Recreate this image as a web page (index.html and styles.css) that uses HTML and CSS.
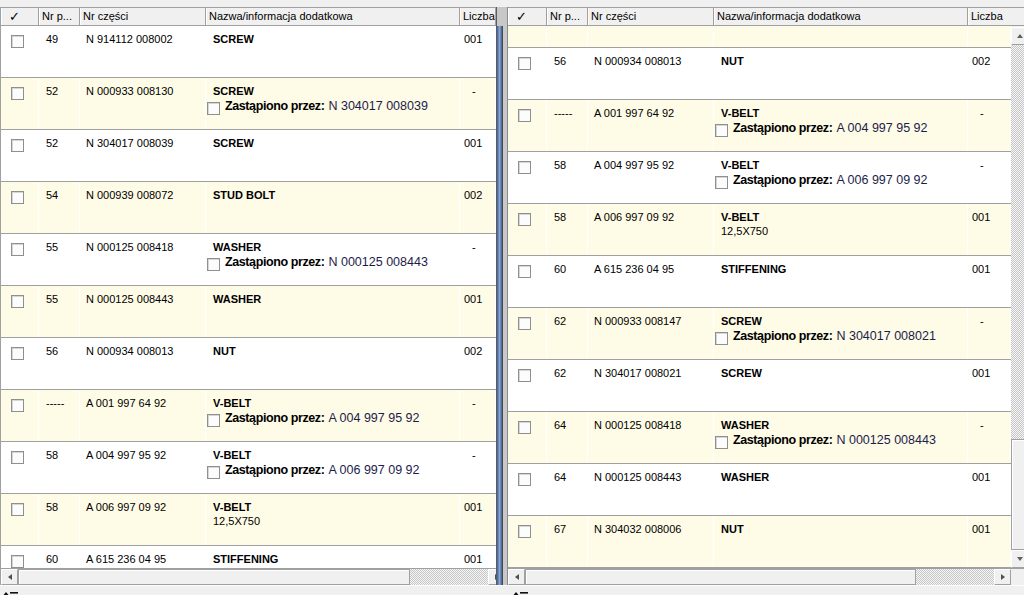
FILE: index.html
```html
<!DOCTYPE html>
<html lang="pl">
<head>
    <meta charset="UTF-8">
    <title>Lista części</title>
    <link rel="stylesheet" href="styles.css">
</head>
<body>
    <div class="topbar"></div>

    <div class="main">
        <!-- Left list -->
        <div class="pane pane-left">
            <div class="head">
                <div class="hc hc-check">✓</div>
                <div class="hc">Nr p...</div>
                <div class="hc">Nr części</div>
                <div class="hc">Nazwa/informacja dodatkowa</div>
                <div class="hc">Liczba</div>
            </div>
            <div class="body">
                <div class="rows">
                    <div class="row">
                        <div class="c c-check"><span class="cb"></span></div>
                        <div class="c c-pos">49</div>
                        <div class="c c-nr">N 914112 008002</div>
                        <div class="c c-name"><b>SCREW</b></div>
                        <div class="c c-qty">001</div>
                    </div>
                    <div class="row alt">
                        <div class="c c-check"><span class="cb"></span></div>
                        <div class="c c-pos">52</div>
                        <div class="c c-nr">N 000933 008130</div>
                        <div class="c c-name"><b>SCREW</b>
                            <div class="repl"><span class="cb"></span><b>Zastąpiono przez:</b> <span class="repl-nr">N 304017 008039</span></div>
                        </div>
                        <div class="c c-qty dash">-</div>
                    </div>
                    <div class="row">
                        <div class="c c-check"><span class="cb"></span></div>
                        <div class="c c-pos">52</div>
                        <div class="c c-nr">N 304017 008039</div>
                        <div class="c c-name"><b>SCREW</b></div>
                        <div class="c c-qty">001</div>
                    </div>
                    <div class="row alt">
                        <div class="c c-check"><span class="cb"></span></div>
                        <div class="c c-pos">54</div>
                        <div class="c c-nr">N 000939 008072</div>
                        <div class="c c-name"><b>STUD BOLT</b></div>
                        <div class="c c-qty">002</div>
                    </div>
                    <div class="row">
                        <div class="c c-check"><span class="cb"></span></div>
                        <div class="c c-pos">55</div>
                        <div class="c c-nr">N 000125 008418</div>
                        <div class="c c-name"><b>WASHER</b>
                            <div class="repl"><span class="cb"></span><b>Zastąpiono przez:</b> <span class="repl-nr">N 000125 008443</span></div>
                        </div>
                        <div class="c c-qty dash">-</div>
                    </div>
                    <div class="row alt">
                        <div class="c c-check"><span class="cb"></span></div>
                        <div class="c c-pos">55</div>
                        <div class="c c-nr">N 000125 008443</div>
                        <div class="c c-name"><b>WASHER</b></div>
                        <div class="c c-qty">001</div>
                    </div>
                    <div class="row">
                        <div class="c c-check"><span class="cb"></span></div>
                        <div class="c c-pos">56</div>
                        <div class="c c-nr">N 000934 008013</div>
                        <div class="c c-name"><b>NUT</b></div>
                        <div class="c c-qty">002</div>
                    </div>
                    <div class="row alt">
                        <div class="c c-check"><span class="cb"></span></div>
                        <div class="c c-pos">-----</div>
                        <div class="c c-nr">A 001 997 64 92</div>
                        <div class="c c-name"><b>V-BELT</b>
                            <div class="repl"><span class="cb"></span><b>Zastąpiono przez:</b> <span class="repl-nr">A 004 997 95 92</span></div>
                        </div>
                        <div class="c c-qty dash">-</div>
                    </div>
                    <div class="row">
                        <div class="c c-check"><span class="cb"></span></div>
                        <div class="c c-pos">58</div>
                        <div class="c c-nr">A 004 997 95 92</div>
                        <div class="c c-name"><b>V-BELT</b>
                            <div class="repl"><span class="cb"></span><b>Zastąpiono przez:</b> <span class="repl-nr">A 006 997 09 92</span></div>
                        </div>
                        <div class="c c-qty dash">-</div>
                    </div>
                    <div class="row alt">
                        <div class="c c-check"><span class="cb"></span></div>
                        <div class="c c-pos">58</div>
                        <div class="c c-nr">A 006 997 09 92</div>
                        <div class="c c-name"><b>V-BELT</b>
                            <div class="sub">12,5X750</div>
                        </div>
                        <div class="c c-qty">001</div>
                    </div>
                    <div class="row">
                        <div class="c c-check"><span class="cb"></span></div>
                        <div class="c c-pos">60</div>
                        <div class="c c-nr">A 615 236 04 95</div>
                        <div class="c c-name"><b>STIFFENING</b></div>
                        <div class="c c-qty">001</div>
                    </div>
                </div>
            </div>
            <div class="hscroll">
                <div class="sb-btn"><span class="arr arr-left"></span></div>
                <div class="sb-thumb"></div>
                <div class="sb-track"></div>
                <div class="sb-btn"><span class="arr arr-right"></span></div>
            </div>
        </div>

        <div class="splitter"><div class="splitter-bar"></div></div>

        <!-- Right list -->
        <div class="pane pane-right">
            <div class="head">
                <div class="hc hc-check">✓</div>
                <div class="hc">Nr p...</div>
                <div class="hc">Nr części</div>
                <div class="hc">Nazwa/informacja dodatkowa</div>
                <div class="hc">Liczba</div>
            </div>
            <div class="body">
                <div class="rows">
                    <div class="row alt partial">
                        <div class="c"></div>
                        <div class="c"></div>
                        <div class="c"></div>
                        <div class="c"></div>
                        <div class="c"></div>
                    </div>
                    <div class="row">
                        <div class="c c-check"><span class="cb"></span></div>
                        <div class="c c-pos">56</div>
                        <div class="c c-nr">N 000934 008013</div>
                        <div class="c c-name"><b>NUT</b></div>
                        <div class="c c-qty">002</div>
                    </div>
                    <div class="row alt">
                        <div class="c c-check"><span class="cb"></span></div>
                        <div class="c c-pos">-----</div>
                        <div class="c c-nr">A 001 997 64 92</div>
                        <div class="c c-name"><b>V-BELT</b>
                            <div class="repl"><span class="cb"></span><b>Zastąpiono przez:</b> <span class="repl-nr">A 004 997 95 92</span></div>
                        </div>
                        <div class="c c-qty dash">-</div>
                    </div>
                    <div class="row">
                        <div class="c c-check"><span class="cb"></span></div>
                        <div class="c c-pos">58</div>
                        <div class="c c-nr">A 004 997 95 92</div>
                        <div class="c c-name"><b>V-BELT</b>
                            <div class="repl"><span class="cb"></span><b>Zastąpiono przez:</b> <span class="repl-nr">A 006 997 09 92</span></div>
                        </div>
                        <div class="c c-qty dash">-</div>
                    </div>
                    <div class="row alt">
                        <div class="c c-check"><span class="cb"></span></div>
                        <div class="c c-pos">58</div>
                        <div class="c c-nr">A 006 997 09 92</div>
                        <div class="c c-name"><b>V-BELT</b>
                            <div class="sub">12,5X750</div>
                        </div>
                        <div class="c c-qty">001</div>
                    </div>
                    <div class="row">
                        <div class="c c-check"><span class="cb"></span></div>
                        <div class="c c-pos">60</div>
                        <div class="c c-nr">A 615 236 04 95</div>
                        <div class="c c-name"><b>STIFFENING</b></div>
                        <div class="c c-qty">001</div>
                    </div>
                    <div class="row alt">
                        <div class="c c-check"><span class="cb"></span></div>
                        <div class="c c-pos">62</div>
                        <div class="c c-nr">N 000933 008147</div>
                        <div class="c c-name"><b>SCREW</b>
                            <div class="repl"><span class="cb"></span><b>Zastąpiono przez:</b> <span class="repl-nr">N 304017 008021</span></div>
                        </div>
                        <div class="c c-qty dash">-</div>
                    </div>
                    <div class="row">
                        <div class="c c-check"><span class="cb"></span></div>
                        <div class="c c-pos">62</div>
                        <div class="c c-nr">N 304017 008021</div>
                        <div class="c c-name"><b>SCREW</b></div>
                        <div class="c c-qty">001</div>
                    </div>
                    <div class="row alt">
                        <div class="c c-check"><span class="cb"></span></div>
                        <div class="c c-pos">64</div>
                        <div class="c c-nr">N 000125 008418</div>
                        <div class="c c-name"><b>WASHER</b>
                            <div class="repl"><span class="cb"></span><b>Zastąpiono przez:</b> <span class="repl-nr">N 000125 008443</span></div>
                        </div>
                        <div class="c c-qty dash">-</div>
                    </div>
                    <div class="row">
                        <div class="c c-check"><span class="cb"></span></div>
                        <div class="c c-pos">64</div>
                        <div class="c c-nr">N 000125 008443</div>
                        <div class="c c-name"><b>WASHER</b></div>
                        <div class="c c-qty">001</div>
                    </div>
                    <div class="row alt">
                        <div class="c c-check"><span class="cb"></span></div>
                        <div class="c c-pos">67</div>
                        <div class="c c-nr">N 304032 008006</div>
                        <div class="c c-name"><b>NUT</b></div>
                        <div class="c c-qty">001</div>
                    </div>
                </div>
                <div class="vscroll">
                    <div class="sb-btn"><span class="arr arr-up"></span></div>
                    <div class="sb-track"></div>
                    <div class="sb-thumb"></div>
                    <div class="sb-btn"><span class="arr arr-down"></span></div>
                </div>
            </div>
            <div class="hscroll">
                <div class="sb-btn"><span class="arr arr-left"></span></div>
                <div class="sb-thumb"></div>
                <div class="sb-track"></div>
                <div class="sb-btn"><span class="arr arr-right"></span></div>
                <div class="sb-corner"></div>
            </div>
        </div>
    </div>

    <div class="statusbar">
        <div class="tool">
            <svg width="18" height="9" viewBox="0 0 18 9">
                <path d="M4 1 L1.5 4 H3.3 V9 H4.7 V4 H6.5 Z" fill="#111"/>
                <rect x="8" y="1" width="8" height="1.6" fill="#111"/>
                <path d="M8 4 H16 L12 9 Z" fill="#111"/>
            </svg>
        </div>
        <div class="tool tool-right">
            <svg width="18" height="9" viewBox="0 0 18 9">
                <path d="M4 1 L1.5 4 H3.3 V9 H4.7 V4 H6.5 Z" fill="#111"/>
                <rect x="8" y="1" width="8" height="1.6" fill="#111"/>
                <path d="M8 4 H16 L12 9 Z" fill="#111"/>
            </svg>
        </div>
    </div>
</body>
</html>
```

FILE: styles.css
```css
* {
    box-sizing: border-box;
}

body {
    margin: 0;
    width: 1024px;
    height: 595px;
    overflow: hidden;
    background: #f0f0f0;
    font-family: "Liberation Sans", Arial, sans-serif;
    font-size: 11px;
    color: #000;
}

.topbar {
    height: 7px;
    background: #f0f0f0;
}

.main {
    display: flex;
    height: 578px;
}

/* panes */

.pane {
    display: flex;
    flex-direction: column;
    flex-shrink: 0;
    overflow: hidden;
    background: #fff;
}

.pane-left {
    width: 496px;
    border-left: 1px solid #a0a0a0;
}

.pane-right {
    width: 520px;
}

.head {
    display: grid;
    height: 19px;
    flex-shrink: 0;
    background: #f0f0f0;
    border-top: 1px solid #a0a0a0;
    border-bottom: 1px solid #a0a0a0;
}

.pane-left .head,
.pane-left .row {
    grid-template-columns: 38px 41px 126px 254px 36px;
}

.pane-right .head {
    grid-template-columns: 39px 41px 126px 254px 60px;
}

.pane-right .row {
    grid-template-columns: 39px 41px 126px 254px 43px;
}

.hc {
    padding-left: 3px;
    line-height: 17px;
    white-space: nowrap;
    overflow: hidden;
    border-right: 1px solid #a0a0a0;
    box-shadow: inset 1px 0 #fff;
}

.hc-check {
    padding-left: 8px;
    font-family: "DejaVu Sans", sans-serif;
    font-size: 13px;
    font-weight: bold;
}

.body {
    display: flex;
    height: 542px;
    overflow: hidden;
}

.rows {
    flex: 1;
    overflow: hidden;
}

/* rows */

.row {
    display: grid;
    height: 52px;
    background: #fff;
    border-bottom: 1px solid #a0a0a0;
}

.row.alt {
    background: #fefbe6;
}

.row.partial {
    height: 22px;
}

.c {
    padding-top: 7px;
    line-height: 13px;
    white-space: nowrap;
    overflow: hidden;
    border-right: 1px solid #fff;
}

.c-check {
    padding-top: 9px;
    padding-left: 10px;
}

.c-pos {
    padding-left: 7px;
}

.c-nr {
    padding-left: 6px;
}

.c-name {
    padding-left: 7px;
    overflow: visible;
}

.c-qty {
    padding-left: 4px;
}

.c-qty.dash {
    padding-left: 12px;
}

.cb {
    display: block;
    width: 13px;
    height: 13px;
    background: #fcfcfc;
    border: 1px solid #8e8f8f;
    box-shadow: inset 1px 1px #d6d6d6;
}

.repl {
    display: flex;
    align-items: flex-start;
    margin-left: -6px;
    margin-top: 1px;
    font-size: 12.5px;
    line-height: 15px;
}

.repl .cb {
    margin-top: 3px;
    margin-right: 5px;
}

.repl b {
    letter-spacing: -0.4px;
    margin-right: 4px;
}

.repl-nr {
    color: #1c1c4c;
}

.sub {
    margin-top: 1px;
}

/* scrollbars */

.hscroll {
    display: flex;
    height: 17px;
    flex-shrink: 0;
    background: #f0f0f0;
    border-top: 1px solid #a0a0a0;
}

.hscroll .sb-btn {
    width: 17px;
    flex-shrink: 0;
}

.pane-left .hscroll .sb-thumb {
    width: 392px;
}

.pane-right .hscroll .sb-thumb {
    width: 391px;
}

.hscroll .sb-track {
    width: 78px;
    flex-shrink: 0;
}

.sb-btn {
    display: flex;
    align-items: center;
    justify-content: center;
    background: #f0f0f0;
    border: 1px solid #b8b8b8;
    border-color: #fff #a0a0a0 #a0a0a0 #fff;
}

.sb-thumb {
    flex-shrink: 0;
    background: #f0f0f0;
    border: 1px solid #a0a0a0;
    box-shadow: inset 1px 1px #fff;
}

.sb-track {
    background: repeating-conic-gradient(#c6c6c6 0 25%, #f6f6f6 0 50%) 0 0 / 2px 2px;
}

.sb-corner {
    width: 17px;
    flex-shrink: 0;
    background: #f0f0f0;
}

.vscroll {
    display: flex;
    flex-direction: column;
    width: 17px;
    flex-shrink: 0;
    background: #f0f0f0;
    padding-top: 1px;
}

.vscroll .sb-btn {
    height: 18px;
    flex-shrink: 0;
}

.vscroll .sb-track {
    flex: 1;
}

.vscroll .sb-thumb {
    height: 111px;
}

.arr {
    width: 0;
    height: 0;
    border: 3px solid transparent;
}

.arr-left {
    border-right: 4px solid #505050;
    border-left-width: 0;
}

.arr-right {
    border-left: 4px solid #505050;
    border-right-width: 0;
}

.arr-up {
    border-bottom: 4px solid #606060;
    border-top-width: 0;
}

.arr-down {
    border-top: 4px solid #606060;
    border-bottom-width: 0;
}

/* splitter */

.splitter {
    width: 12px;
    flex-shrink: 0;
    background: #c8c8c8;
    border-left: 1px solid #5c5c5c;
    border-right: 1px solid #8a8a8a;
    padding-top: 19px;
}

.splitter-bar {
    width: 6px;
    height: 100%;
    background: linear-gradient(to right, #3e5f96, #8aa7d2 50%, #3e5f96);
    border-right: 1px solid #4a4a4a;
}

/* status bar */

.statusbar {
    display: flex;
    height: 10px;
    background: #f0f0f0;
    border-top: 1px solid #fdfdfd;
}

.tool {
    width: 508px;
    padding: 4px 0 0 2px;
    overflow: hidden;
}

.tool-right {
    padding-left: 4px;
}
```
